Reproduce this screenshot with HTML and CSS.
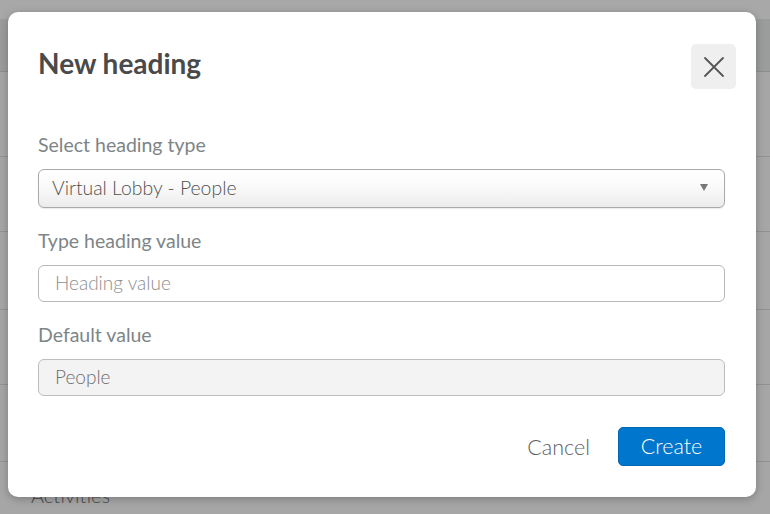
FILE: index.html
```html
<!DOCTYPE html>
<html lang="en">
<head>
<meta charset="utf-8">
<title>New heading</title>
<link rel="stylesheet" href="styles.css">
</head>
<body>
<div class="page">
  <div class="topbar"></div>
  <div class="navband"></div>
  <div class="row r1"></div>
  <div class="row r2"></div>
  <div class="row r3"></div>
  <div class="row r4"></div>
  <div class="row r5"></div>
  <div class="row last"><span class="row-text">Activities</span></div>
</div>

<div class="modal" role="dialog" aria-labelledby="mtitle">
  <div class="modal-head">
    <h1 class="modal-title" id="mtitle">New heading</h1>
    <button class="close-btn" aria-label="Close">
      <svg width="22" height="22" viewBox="0 0 22 22"><path d="M2 2 L20 20 M20 2 L2 20" stroke="#555" stroke-width="1.8" stroke-linecap="round" fill="none"/></svg>
    </button>
  </div>

  <div class="field first">
    <label class="field-label">Select heading type</label>
    <div class="select">
      <span class="select-text">Virtual Lobby - People</span>
      <span class="caret"></span>
    </div>
  </div>

  <div class="field">
    <label class="field-label">Type heading value</label>
    <div class="input"><span class="placeholder">Heading value</span></div>
  </div>

  <div class="field">
    <label class="field-label">Default value</label>
    <div class="input disabled"><span class="disabled-text">People</span></div>
  </div>

  <div class="modal-foot">
    <button class="btn-cancel">Cancel</button>
    <button class="btn-create">Create</button>
  </div>
</div>
</body>
</html>
```

FILE: styles.css
```css
* { box-sizing: border-box; }
html, body { margin: 0; padding: 0; }
body {
  width: 770px;
  height: 514px;
  overflow: hidden;
  font-family: Lato, "Open Sans", "Liberation Sans", sans-serif;
  background: #a6a6a6;
  position: relative;
}

.page { display: flex; flex-direction: column; }
.topbar { height: 19px; background: #a8a8a8; }
.navband { height: 53px; background: #9b9c9c; border-bottom: 1px solid #8f8f8f; }
.row { background: #a6a6a6; border-bottom: 1px solid #929292; }
.r1 { height: 85px; }
.r2 { height: 75px; }
.r3 { height: 78px; }
.r4 { height: 75px; }
.r5 { height: 77px; }
.last { height: 60px; border-bottom: none; padding: 21px 0 0 31px; }
.row-text { font-size: 20px; font-weight: 300; color: #4a4a4a; line-height: 24px; }

.modal {
  position: absolute;
  left: 8px;
  top: 12px;
  width: 748px;
  height: 485px;
  background: #fff;
  border-radius: 10px;
  box-shadow: 0 2px 8px rgba(0,0,0,0.25);
  padding: 32px 31px 0 30px;
  display: flex;
  flex-direction: column;
}

.modal-head {
  display: flex;
  justify-content: space-between;
  align-items: flex-start;
  margin-right: -11px;
}
.modal-title {
  margin: 4px 0 0 0;
  font-size: 28px;
  line-height: 31px;
  font-weight: 700;
  color: #4a4a4a;
}
.close-btn {
  width: 45px;
  height: 45px;
  border: none;
  border-radius: 5px;
  background: #efefef;
  display: flex;
  align-items: center;
  justify-content: center;
  padding: 0;
}

.field { display: flex; flex-direction: column; margin-top: 21px; }
.field.first { margin-top: 44px; }
.field-label {
  font-size: 19.5px;
  line-height: 23px;
  color: #7d8587;
  margin-bottom: 13px;
}

.select {
  height: 39px;
  border: 1px solid #a9a9a9;
  border-radius: 6px;
  background: linear-gradient(#ffffff 0%, #fbfbfb 40%, #ececec 100%);
  display: flex;
  align-items: center;
  justify-content: space-between;
  padding: 0 16px 2px 13px;
  box-shadow: 0 1px 1px rgba(0,0,0,0.08);
}
.select-text { font-size: 19.4px; font-weight: 300; color: #505050; line-height: 22px; }
.caret {
  width: 0; height: 0;
  border-left: 4.5px solid transparent;
  border-right: 4.5px solid transparent;
  border-top: 7px solid #777;
}

.input {
  height: 37px;
  border: 1px solid #b8b8b8;
  border-radius: 6px;
  background: #fff;
  display: flex;
  align-items: center;
  padding: 0 16px 1px;
}
.input.disabled { background: #f3f3f3; border-color: #bdbdbd; }
.placeholder { font-size: 19px; font-weight: 300; color: #8e8e8e; line-height: 22px; }
.disabled-text { font-size: 19px; font-weight: 300; color: #6e6e6e; line-height: 22px; }

.modal-foot {
  display: flex;
  justify-content: flex-end;
  align-items: center;
  margin-top: 31px;
  gap: 28px;
}
.btn-cancel {
  border: none;
  background: none;
  padding: 0;
  font-family: inherit;
  font-size: 21.5px;
  font-weight: 300;
  color: #5e5e5e;
}
.btn-create {
  width: 107px;
  height: 39px;
  border: 1px solid #0068b3;
  border-radius: 5px;
  background: #0077cc;
  color: #fff;
  font-family: inherit;
  font-size: 21.5px;
  font-weight: 300;
  padding: 0 0 2px;
}
```
